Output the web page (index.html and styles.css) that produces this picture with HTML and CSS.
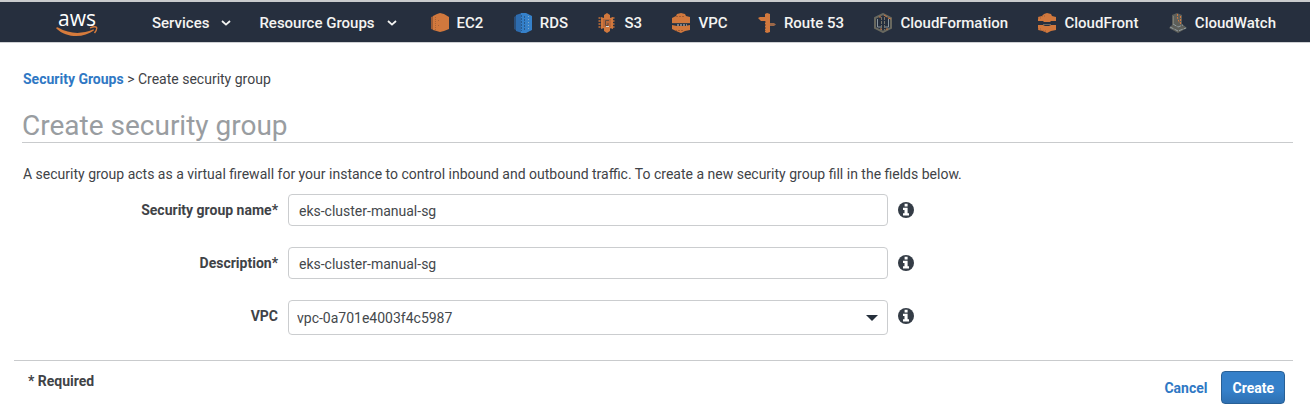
FILE: index.html
```html
<!DOCTYPE html>
<html lang="en">
<head>
<meta charset="utf-8">
<title>Create security group</title>
<link rel="stylesheet" href="styles.css">
</head>
<body>
<svg class="defs" aria-hidden="true">
  <symbol id="chevron" viewBox="0 0 10 6"><path d="M1 1l4 3.600L9 1" fill="none" stroke="currentColor" stroke-width="1.800"/></symbol>
  <symbol id="info" viewBox="0 0 16 16"><circle cx="8" cy="8" r="8" fill="#343c46"/><path d="M6.600 1.800h3v2.800h-3zM5 5.800h4.600v5.400H11v2.200H5v-2.200h1.500V8H5z" fill="#fff"/></symbol>
</svg>
<header class="topbar">
  <a class="logo" href="#" aria-label="aws home">
    <span class="logo-text">aws</span>
    <svg class="smile" viewBox="0 0 42 11" aria-hidden="true"><path d="M.3 1.800Q1 .9 2 1.600C14 8.400 26 8.300 37 3.600q1.600-.4.8 1C28 12 11 12.600.3 2.500z" fill="#d67b3c"/><path d="M34 1.800C37 .7 40 .6 40.600 1.500c.4 1.300-.7 3.800-2.100 5.500" fill="none" stroke="#d67b3c" stroke-width="1.400"/></svg>
  </a>
  <nav class="menus">
    <button class="menu" type="button">Services<svg class="chevron"><use href="#chevron"/></svg></button>
    <button class="menu" type="button">Resource Groups<svg class="chevron"><use href="#chevron"/></svg></button>
  </nav>
  <nav class="shortcuts">
    <a href="#"><svg viewBox="0 0 18 20"><path d="M0 4l3-1v14l-3-1z" fill="#9d5c35"/><path d="M2 3l4-2 3-1 4 1 5 3v12l-5 2-4 1-7-2z" fill="#d1783d"/><path d="M4.500 4v13M7.500 7v1M7.500 12v1" stroke="#a86337" stroke-dasharray="1 1"/></svg>EC2</a>
    <a href="#"><svg viewBox="0 0 18 20"><path d="M0 4l3-2v16l-3-2z" fill="#2c5d94" fill-opacity=".7"/><path d="M2 2l6-2v20l-6-2z" fill="#2d6caf"/><path d="M7 0h5l6 3v14l-6 3H7z" fill="#3580c9"/><path d="M7.500 2v16M10.500 3v14" stroke="#285a8e" stroke-dasharray="2 1"/><path d="M14.500 3v15" stroke="#82abc9" stroke-dasharray="1 2"/></svg>RDS</a>
    <a href="#"><svg viewBox="0 0 18 20"><path d="M1.500 4v12M15.500 4v12" stroke="#9d6139" stroke-width="2" stroke-dasharray="2 1"/><path d="M3 4l3 1v10l-3 1zM15 4l-3 1v10l3 1zM6 2l3-2 3 2v4H6zM6 14h6v4l-3 2-3-2z" fill="#d1783d"/><path d="M5 6h8v8H5z" fill="#b9683a"/><path d="M11 7.500H7.500v5H10V10" fill="none" stroke="#5f4b3f"/><path d="M8 13.500h3" stroke="#d8d9d9"/></svg>S3</a>
    <a href="#"><svg viewBox="0 0 18 20"><path d="M0 5l4-2 1-2 4-1 4 1 1 2 4 1v6H0zM0 12l5 1h8l5-1v5l-5 1-4 2-5-2-4-2z" fill="#d1783d"/><path d="M4 3.500h8M3 17.500h8" stroke="#9e5c35" stroke-dasharray="2 1"/><path d="M0 10.500h18" stroke="#3a3f48"/><path d="M5 12h10" stroke="#d8d0c5" stroke-dasharray="2 1"/></svg>VPC</a>
    <a href="#"><svg viewBox="0 0 18 20"><path d="M7 1l2-1 3 1v18l-3 1-2-1V8H3L0 5l2-1h5z" fill="#d1783d"/><path d="M7.500 8v10" stroke="#925a38" stroke-dasharray="2 1"/><path d="M12 10h4l2 1.500-2 1.500h-4z" fill="#9b6748"/></svg>Route 53</a>
    <a href="#"><svg viewBox="0 0 18 20"><path d="M1 5l8-4 8 4v10l-8 4-8-4z" fill="none" stroke="#68685f" stroke-width="2"/><path d="M3.500 6v8H7M14.500 6v8H11" fill="none" stroke="#8b979e"/><path d="M7.500 4v13M10.500 4v13" stroke="#75736a" stroke-dasharray="3 1"/><path d="M10 2l3 2M14 5l3 1M5 4h2M6 16h2M12 16h2" stroke="#ca743d"/></svg>CloudFormation</a>
    <a href="#"><svg viewBox="0 0 18 20"><path d="M0 4l4-1 2-2 3-1 4 1 1 2 4 1v4h-5l-1 1H6L5 8H0zM0 12h5l2 1h4l2-1h5v5l-5 1-4 2-4-2-5-1z" fill="#d1783d"/><path d="M0 5h3M4 3h3M0 16h4M5 18h3" stroke="#9f5e38" stroke-dasharray="1 1"/><path d="M5 11.500h8" stroke="#6b665f"/></svg>CloudFront</a>
    <a href="#"><svg viewBox="0 0 18 20"><path d="M3 2l5-2 5 2v9l5 4-9 5-9-5 3-3z" fill="#5d5f5a"/><path d="M8.500 1v4l2 5M11.500 3v9" fill="none" stroke="#ce7841" stroke-dasharray="2 1"/><path d="M1 14l8 4 8-3M4 11l5 3 5-2" fill="none" stroke="#929da1" stroke-dasharray="4 1"/><path d="M4.500 3v8" stroke="#7c7d75"/></svg>CloudWatch</a>
  </nav>
</header>
<main class="page">
  <nav class="crumbs"><a href="#">Security Groups</a> &gt; Create security group</nav>
  <h1>Create security group</h1>
  <p class="intro">A security group acts as a virtual firewall for your instance to control inbound and outbound traffic. To create a new security group fill in the fields below.</p>
  <form>
    <div class="fields">
      <label for="name">Security group name*</label>
      <input id="name" type="text" value="eks-cluster-manual-sg">
      <svg class="info" role="img" aria-label="Information"><use href="#info"/></svg>
      <label for="description">Description*</label>
      <input id="description" type="text" value="eks-cluster-manual-sg">
      <svg class="info" role="img" aria-label="Information"><use href="#info"/></svg>
      <label for="vpc">VPC</label>
      <div class="select">
        <select id="vpc"><option>vpc-0a701e4003f4c5987</option></select>
        <svg class="caret" viewBox="0 0 12 6" aria-hidden="true"><path d="M0 0h12L6 6z" fill="#26303c"/></svg>
      </div>
      <svg class="info" role="img" aria-label="Information"><use href="#info"/></svg>
    </div>
    <footer class="actions">
      <span class="required">* Required</span>
      <a class="cancel" href="#">Cancel</a>
      <button class="create" type="submit">Create</button>
    </footer>
  </form>
</main>
</body>
</html>
```
FILE: styles.css
```css
* { box-sizing: border-box; }
body { margin: 0; background: #fff; color: #3f4347; font: 14px/20px Roboto, sans-serif; }
a { color: #2f78c4; text-decoration: none; font-weight: 700; }
button { font: inherit; cursor: pointer; }
.defs { display: none; }

.topbar {
  display: flex;
  align-items: center;
  height: 43px;
  padding: 2px 34px 0 56px;
  background: #262f3e;
  border-top: 2px solid #c9cbcd;
  border-bottom: 1px solid #cfd1d4;
  color: #f4f4f2;
  font-size: 15px;
  font-weight: 500;
  white-space: nowrap;
}
.logo { display: flex; flex-direction: column; align-items: center; width: 42px; margin-right: 54px; }
.logo-text { color: #fff; font: 500 21px/16px "Open Sans", sans-serif; }
.smile { width: 42px; height: 11px; }
.menus { display: flex; gap: 28px; margin-right: 34px; }
.menu { display: flex; align-items: center; gap: 12px; padding: 0; border: 0; background: none; color: inherit; }
.chevron { width: 10px; height: 6px; }
.shortcuts { display: flex; flex: 1; justify-content: space-between; }
.shortcuts a { display: flex; align-items: center; gap: 8px; color: inherit; font-weight: 500; }
.shortcuts svg { width: 18px; height: 20px; }

.page { padding: 26px 17px 0 14px; }
.crumbs { padding-left: 9px; }
h1 {
  margin: 21px 0 0 8px;
  border-bottom: 1px solid #c9cbcd;
  color: #999da1;
  font-size: 28px;
  font-weight: 400;
  line-height: 32px;
}
.intro { margin: 21px 0 10px 9px; }
.fields {
  display: grid;
  grid-template-columns: 264px minmax(0, 600px) 16px;
  column-gap: 10px;
  row-gap: 21px;
}
.fields label { padding-top: 6px; text-align: right; font-weight: 700; }
.fields input, .fields select {
  display: block;
  width: 100%;
  height: 32px;
  border: 1px solid #cbcdcf;
  border-radius: 4px;
  padding: 1px 10px 0;
  background: #fff;
  color: #44484c;
  font: inherit;
}
.fields select { height: 35px; padding: 0 8px; appearance: none; }
.select { position: relative; }
.caret { position: absolute; top: 15px; right: 10px; width: 12px; height: 6px; pointer-events: none; }
.info { width: 16px; height: 16px; margin-top: 8px; }

.actions {
  display: flex;
  align-items: center;
  gap: 14px;
  margin-top: 25px;
  padding: 10px 8px 7px 14px;
  border-top: 1px solid #c9cbcd;
}
.required { align-self: flex-start; margin-right: auto; font-weight: 700; }
.create {
  height: 33px;
  padding: 0 10px;
  border: 1px solid #286096;
  border-radius: 4px;
  background: linear-gradient(#3580c9 60%, #2e70b2);
  color: #fff;
  font-weight: 700;
}
```
